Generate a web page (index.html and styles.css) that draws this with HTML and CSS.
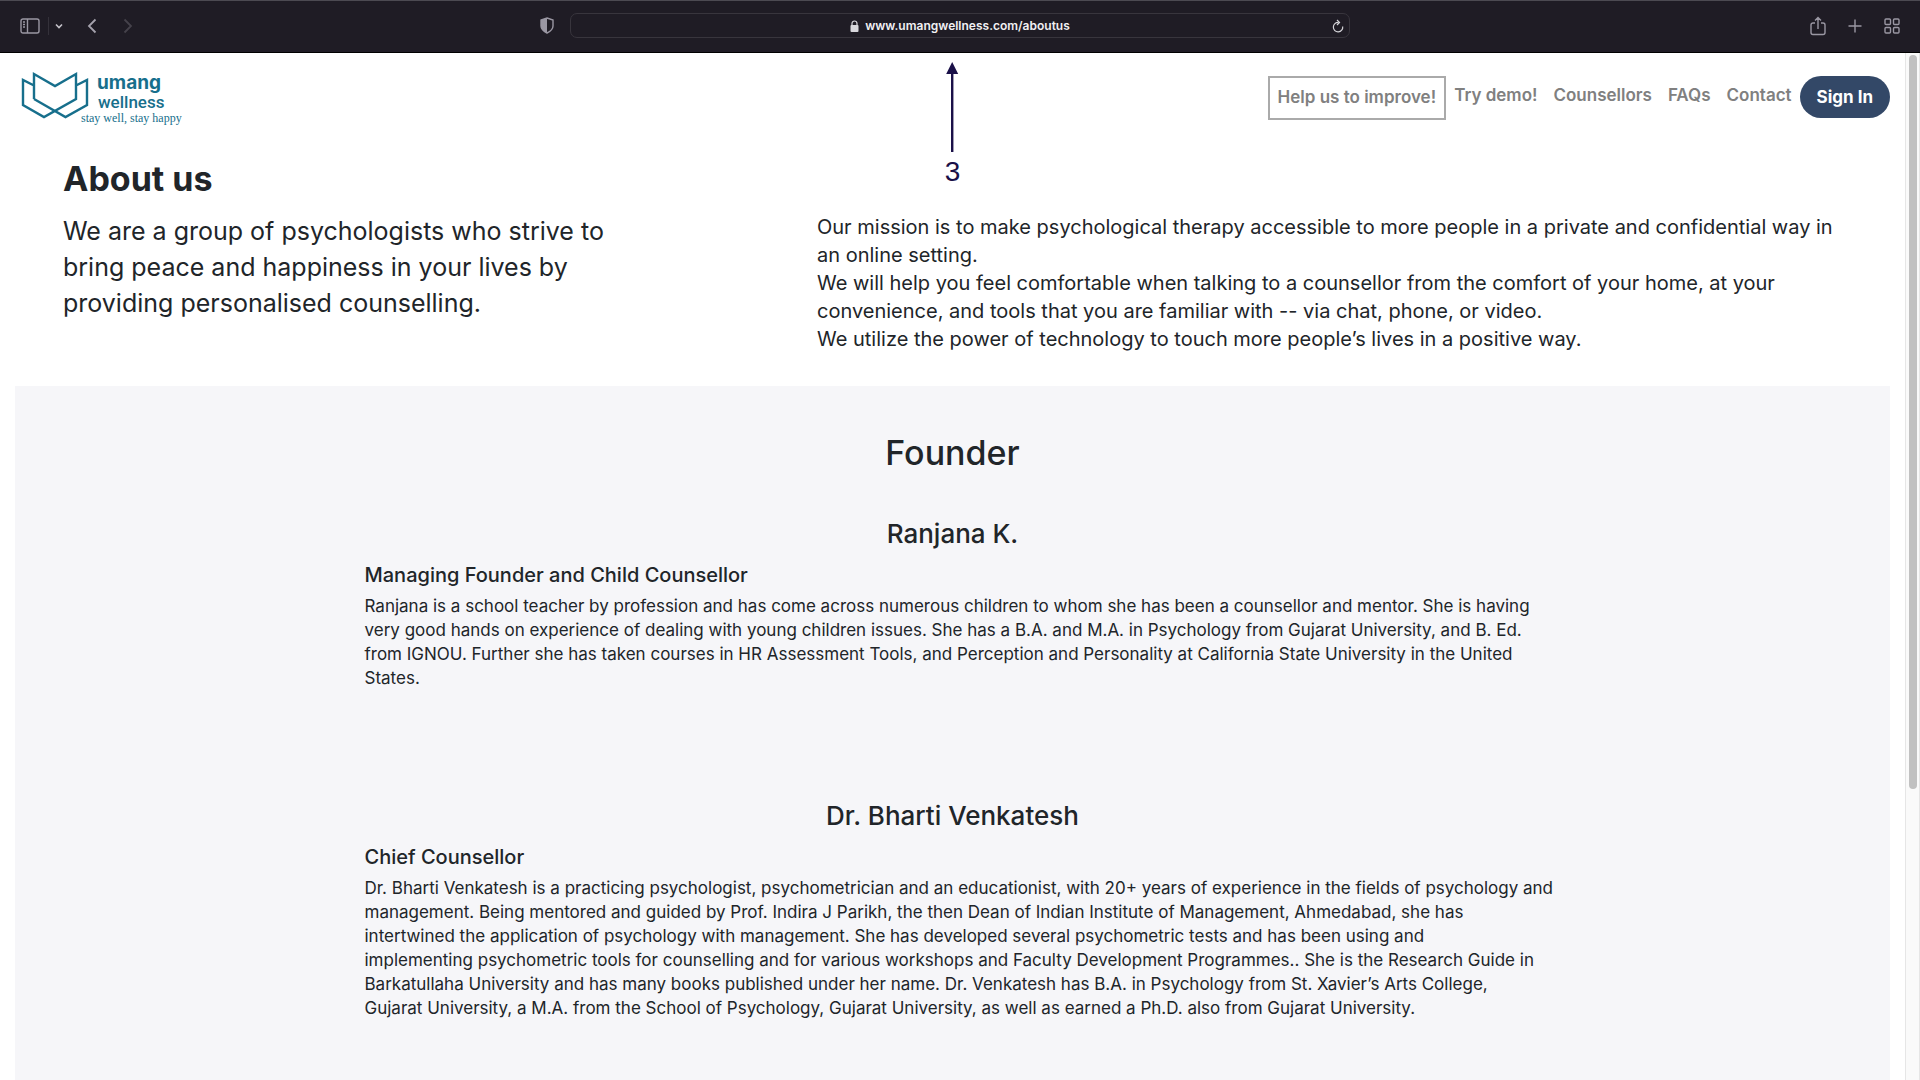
FILE: index.html
```html
<!DOCTYPE html>
<html lang="en">
<head>
<meta charset="utf-8">
<meta name="viewport" content="width=device-width, initial-scale=1">
<title>About us - Umang Wellness</title>
<link rel="stylesheet" href="styles.css">
</head>
<body>
<div class="toolbar">
  <div class="toolbar-side">
    <button class="tool" aria-label="Sidebar"><svg width="20" height="16" viewBox="0 0 20 16"><rect x="1" y="1" width="18" height="14" rx="2" /><path d="M7.500 1v14M3 4h2M3 6.500h2M3 9h2"/></svg></button>
    <span class="divider"></span>
    <button class="tool tool-chevron" aria-label="Tab groups"><svg width="8" height="6" viewBox="0 0 8 6"><path class="bright" d="M1 1.500l3 3 3-3"/></svg></button>
    <button class="tool tool-back" aria-label="Back"><svg width="10" height="16" viewBox="0 0 10 16"><path class="back" d="M8.500 1.500L2 8l6.500 6.500"/></svg></button>
    <button class="tool tool-forward" aria-label="Forward" disabled><svg width="10" height="16" viewBox="0 0 10 16"><path class="dim" d="M1.500 1.500L8 8l-6.500 6.500"/></svg></button>
    <button class="tool tool-privacy" aria-label="Privacy report"><svg width="14" height="17" viewBox="0 0 14 17"><path d="M7 1l6 2v6c0 3.500-3 5.500-6 7-3-1.500-6-3.500-6-7V3z"/><path class="fill" d="M7 1v15c-3-1.500-6-3.500-6-7V3z"/></svg></button>
  </div>
  <div class="address">
    <svg class="lock" width="9" height="12" viewBox="0 0 9 12"><path d="M2 6V3.500a2.500 2.500 0 0 1 5 0V6"/><rect x="0.500" y="5" width="8" height="7" rx="1"/></svg>
    <input class="url" type="text" value="www.umangwellness.com/aboutus" aria-label="Address" readonly>
    <button class="tool reload" aria-label="Reload"><svg width="12" height="14" viewBox="0 0 12 14"><path class="bright-thin" d="M6.500 3.500A4.700 4.700 0 1 0 10.700 7.500M5 1l2.500 2.500L5 6"/></svg></button>
  </div>
  <div class="toolbar-side toolbar-end">
    <button class="tool" aria-label="Share"><svg width="16" height="20" viewBox="0 0 16 20"><path d="M5 7H3a2 2 0 0 0-2 2v7.500a2 2 0 0 0 2 2h10a2 2 0 0 0 2-2V9a2 2 0 0 0-2-2h-2M8 13V1.500M5 4.500l3-3 3 3"/></svg></button>
    <button class="tool" aria-label="New tab"><svg width="14" height="14" viewBox="0 0 14 14"><path d="M7 0.500v13M0.500 7h13"/></svg></button>
    <button class="tool" aria-label="Tab overview"><svg width="16" height="16" viewBox="0 0 16 16"><rect x="1" y="1" width="5.500" height="5.500" rx="1"/><rect x="9.500" y="1" width="5.500" height="5.500" rx="1"/><rect x="1" y="9.500" width="5.500" height="5.500" rx="1"/><rect x="9.500" y="9.500" width="5.500" height="5.500" rx="1"/></svg></button>
  </div>
</div>
<div class="window">
  <div class="page">
    <header class="header">
      <a class="logo" href="#" aria-label="Umang Wellness">
        <svg width="164" height="60" viewBox="20 68 164 60">
          <path d="M34 99V74l21 12 21-12v25l-32 18-21-12V80l11 5.500M34 99l31.500 18L87 105V80l-11 5.500"/>
          <text class="logo-name" x="97" y="89">umang</text>
          <text class="logo-sub" x="98" y="108">wellness</text>
          <text class="logo-tag" x="81" y="122">stay well, stay happy</text>
        </svg>
      </a>
      <nav class="nav">
        <a class="nav-boxed" href="#">Help us to improve!</a>
        <a class="nav-link" href="#">Try demo!</a>
        <a class="nav-link" href="#">Counsellors</a>
        <a class="nav-link" href="#">FAQs</a>
        <a class="nav-link" href="#">Contact</a>
        <button class="sign-in">Sign In</button>
      </nav>
    </header>
    <section class="about">
      <div class="intro">
        <h1>About us</h1>
        <p>We are a group of psychologists who strive to bring peace and happiness in your lives by providing personalised counselling.</p>
      </div>
      <div class="mission">
        <p>Our mission is to make psychological therapy accessible to more people in a private and confidential way in an online setting.</p>
        <p>We will help you feel comfortable when talking to a counsellor from the comfort of your home, at your convenience, and tools that you are familiar with -- via chat, phone, or video.</p>
        <p>We utilize the power of technology to touch more people’s lives in a positive way.</p>
      </div>
    </section>
    <section class="team">
      <h2>Founder</h2>
      <article class="person">
        <h3>Ranjana K.</h3>
        <h4>Managing Founder and Child Counsellor</h4>
        <p>Ranjana is a school teacher by profession and has come across numerous children to whom she has been a counsellor and mentor. She is having very good hands on experience of dealing with young children issues. She has a B.A. and M.A. in Psychology from Gujarat University, and B. Ed. from IGNOU. Further she has taken courses in HR Assessment Tools, and Perception and Personality at California State University in the United States.</p>
      </article>
      <article class="person">
        <h3>Dr. Bharti Venkatesh</h3>
        <h4>Chief Counsellor</h4>
        <p class="bio-lines">Dr. Bharti Venkatesh is a practicing psychologist, psychometrician and an educationist, with 20+ years of experience in the fields of psychology and<br>
        management. Being mentored and guided by Prof. Indira J Parikh, the then Dean of Indian Institute of Management, Ahmedabad, she has<br>
        intertwined the application of psychology with management. She has developed several psychometric tests and has been using and<br>
        implementing psychometric tools for counselling and for various workshops and Faculty Development Programmes.. She is the Research Guide in<br>
        Barkatullaha University and has many books published under her name. Dr. Venkatesh has B.A. in Psychology from St. Xavier’s Arts College,<br>
        Gujarat University, a M.A. from the School of Psychology, Gujarat University, as well as earned a Ph.D. also from Gujarat University.</p>
      </article>
    </section>
    <div class="callout">
      <svg width="14" height="92" viewBox="0 0 14 92"><path d="M7 10v80"/><path class="head" d="M7 0l6 12H1z"/></svg>
      <span>3</span>
    </div>
  </div>
  <div class="scrollbar"><div class="thumb"></div></div>
</div>
</body>
</html>
```
FILE: styles.css
```css
* { box-sizing: border-box; }
body {
  margin: 0;
  height: 100vh;
  display: flex;
  flex-direction: column;
  overflow: hidden;
  font-family: Inter, "Open Sans", sans-serif;
  color: #212529;
  background: #fff;
}
h1, h2, h3, h4, p { margin: 0; }
a { color: inherit; text-decoration: none; }
button { border: 0; padding: 0; font-family: inherit; }

/* Browser toolbar */
.toolbar {
  flex: none;
  height: 53px;
  display: flex;
  align-items: center;
  gap: 16px;
  padding: 0 20px 2px;
  background: #1f1c25;
  border-top: 1px solid #4c4a52;
  border-bottom: 1px solid #000;
}
.toolbar-side { flex: 1; display: flex; align-items: center; }
.toolbar-end { justify-content: flex-end; gap: 22px; }
.tool { display: flex; background: none; }
.tool svg { fill: none; stroke: #9a97a3; stroke-width: 1.4; }
.tool .fill { fill: #9a97a3; stroke: none; }
.tool .bright { stroke: #c4c2ca; stroke-width: 1.6; }
.tool .bright-thin { stroke: #d4d3d8; stroke-width: 1.2; }
.tool .back { stroke: #a5a2ad; stroke-width: 1.8; }
.tool .dim { stroke: #45424b; stroke-width: 1.8; }
.divider { width: 1px; height: 18px; margin: 0 6px 0 8px; background: #34313a; }
.tool-back { margin-left: 24px; }
.tool-forward { margin-left: 26px; }
.tool-privacy { margin-left: auto; }
.address {
  position: relative;
  flex: none;
  width: 41.5%;
  height: 25px;
  display: flex;
  align-items: center;
  justify-content: center;
  gap: 6px;
  border: 1px solid #38353d;
  border-radius: 7px;
}
.lock { fill: #d8d7dc; }
.lock path { fill: none; stroke: #d8d7dc; stroke-width: 1.2; }
.url {
  field-sizing: content;
  border: 0;
  padding: 0;
  background: none;
  color: #f1f0f3;
  font: 600 12px/20px Inter, sans-serif;
}
.reload { position: absolute; right: 5px; }

/* Page */
.window { flex: 1; min-height: 0; display: flex; }
.page { position: relative; flex: 1; overflow: hidden; padding: 0 15px; }
.scrollbar {
  flex: none;
  width: 15px;
  padding: 2px 2px 0 3px;
  background: #fafafa;
  border-left: 1px solid #e6e6e6;
  border-right: 1px solid #e6e6e6;
}
.thumb { width: 8px; height: 71.6%; border-radius: 4px; background: #c1c1c1; }

.header { display: flex; justify-content: space-between; align-items: flex-start; padding-left: 5px; }
.logo { display: flex; padding-top: 15px; }
.logo path { fill: none; stroke: #176f8c; stroke-width: 2.4; }
.logo text { fill: #176f8c; }
.logo-name { font: 700 19px Inter, sans-serif; }
.logo-sub { font: 500 17px Roboto, sans-serif; }
.logo-tag { font: 12px "Liberation Serif", serif; }
.nav { display: flex; padding-top: 23px; font-size: 17px; font-weight: 600; line-height: 24px; color: #808080; }
.nav-boxed { height: 44px; padding: 7px 8px; border: 2px solid #aaa; }
.nav-link { padding: 7px 8px; }
.sign-in {
  height: 42px;
  padding: 0 17px;
  border-radius: 21px;
  background: #334867;
  color: #fff;
  font-size: 17px;
  font-weight: 700;
}

.about { display: grid; grid-template-columns: minmax(0, 754px) 1fr; padding: 31px 32px 0 48px; }
.intro { max-width: 600px; }
.intro h1 { font-size: 34px; line-height: 40px; font-weight: 700; }
.intro p { margin-top: 14px; font-size: 25px; line-height: 36px; }
.mission { padding-top: 54px; font-size: 20px; line-height: 28px; }

.team { margin-top: 33px; padding: 47px 0 80px; background: #f6f6f9; }
.team h2 { font-size: 34px; line-height: 40px; font-weight: 500; text-align: center; }
.person { max-width: 1176px; margin: 0 auto; padding-top: 45px; }
.person + .person { padding-top: 110px; }
.person h3 { font-size: 26px; line-height: 32px; font-weight: 500; text-align: center; }
.person h4 { margin-top: 13px; font-size: 20px; line-height: 24px; font-weight: 500; }
.person p { margin-top: 7px; font-size: 17px; line-height: 24px; }
.person .bio-lines { white-space: nowrap; }

/* Numbered pointer over the page */
.callout {
  position: absolute;
  top: 9px;
  left: 50%;
  display: flex;
  flex-direction: column;
  align-items: center;
  gap: 2px;
  transform: translateX(-50%);
  color: #1a1048;
  font: 28px/32px "Liberation Sans", sans-serif;
}
.callout path { stroke: #1a1048; stroke-width: 2.4; }
.callout .head { fill: #1a1048; stroke: none; }
```
